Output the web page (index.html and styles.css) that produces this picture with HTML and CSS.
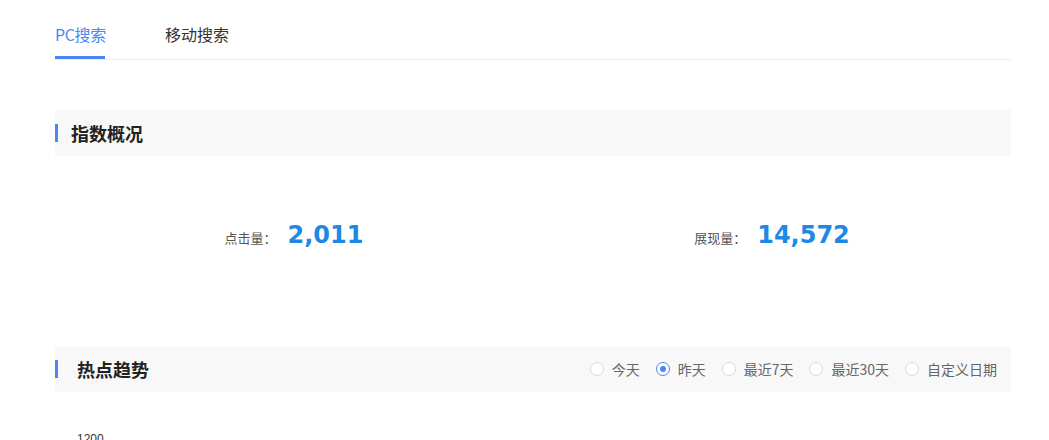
FILE: index.html
```html
<!DOCTYPE html>
<html lang="zh">
<head>
<meta charset="utf-8">
<link rel="stylesheet" href="styles.css">
</head>
<body>
<div class="page">
  <div class="tabs">
    <div class="tab active">PC搜索</div>
    <div class="tab">移动搜索</div>
  </div>

  <div class="section-head">
    <span class="bar"></span>
    <h2 class="title">指数概况</h2>
  </div>

  <div class="stats">
    <div class="stat">
      <span class="label">点击量：</span>
      <span class="value">2,011</span>
    </div>
    <div class="stat">
      <span class="label">展现量：</span>
      <span class="value">14,572</span>
    </div>
  </div>

  <div class="section-head trend">
    <span class="bar"></span>
    <h2 class="title">热点趋势</h2>
    <div class="radios">
      <label class="radio"><span class="dot"></span>今天</label>
      <label class="radio checked"><span class="dot"></span>昨天</label>
      <label class="radio"><span class="dot"></span>最近7天</label>
      <label class="radio"><span class="dot"></span>最近30天</label>
      <label class="radio"><span class="dot"></span>自定义日期</label>
    </div>
  </div>

  <div class="chart">
    <div class="axis-label">1200</div>
  </div>
</div>
</body>
</html>
```

FILE: styles.css
```css
* { box-sizing: border-box; }
html, body { margin: 0; padding: 0; background: #fff; }
body {
  font-family: "Microsoft YaHei", "Noto Sans CJK SC", "Noto Sans", sans-serif;
  color: #333;
  overflow: hidden;
}
.page {
  width: 956px;
  margin-left: 55px;
  padding-top: 21px;
}
.tabs {
  display: flex;
  gap: 60px;
  border-bottom: 1px solid #ececec;
  height: 39px;
}
.tab {
  font-size: 16px;
  line-height: 26px;
  color: #333;
  height: 38px;
  white-space: nowrap;
}
.tab.active {
  color: #4a86f5;
  border-bottom: 3px solid #4a86f5;
  width: 50px;
  letter-spacing: -0.4px;
}
.section-head {
  display: flex;
  align-items: center;
  height: 46px;
  background: #f8f8f8;
  margin-top: 50px;
}
.bar {
  width: 3px;
  height: 18px;
  background: #4a86f5;
}
.title {
  margin: 0 0 0 13px;
  font-size: 18px;
  font-weight: bold;
  color: #222;
}
.trend {
  margin-top: 0;
}
.trend .title { margin-left: 19px; }
.stats {
  display: grid;
  grid-template-columns: 1fr 1fr;
  height: 190px;
  padding-top: 65px;
  align-items: start;
}
.stat {
  display: flex;
  justify-content: center;
  align-items: baseline;
  gap: 11px;
  height: 30px;
}
.label {
  font-size: 13px;
  color: #555;
}
.value {
  font-family: "DejaVu Sans", Verdana, sans-serif;
  font-weight: bold;
  font-size: 24px;
  color: #1e88e5;
}
.radios {
  margin-left: auto;
  margin-right: 14px;
  display: flex;
  gap: 16px;
}
.radio {
  display: flex;
  align-items: center;
  font-size: 14px;
  color: #666;
}
.dot {
  width: 14px;
  height: 14px;
  border: 1px solid #d9d9d9;
  border-radius: 50%;
  background: #fff;
  margin-right: 8px;
  position: relative;
}
.radio.checked .dot {
  border-color: #4a86f5;
}
.radio.checked .dot::after {
  content: "";
  position: absolute;
  left: 3px;
  top: 3px;
  width: 6px;
  height: 6px;
  border-radius: 50%;
  background: #4a86f5;
}
.chart {
  padding-top: 40px;
  padding-left: 22px;
}
.axis-label {
  font-family: "Liberation Sans", Arial, sans-serif;
  font-size: 12px;
  color: #333;
}
```
